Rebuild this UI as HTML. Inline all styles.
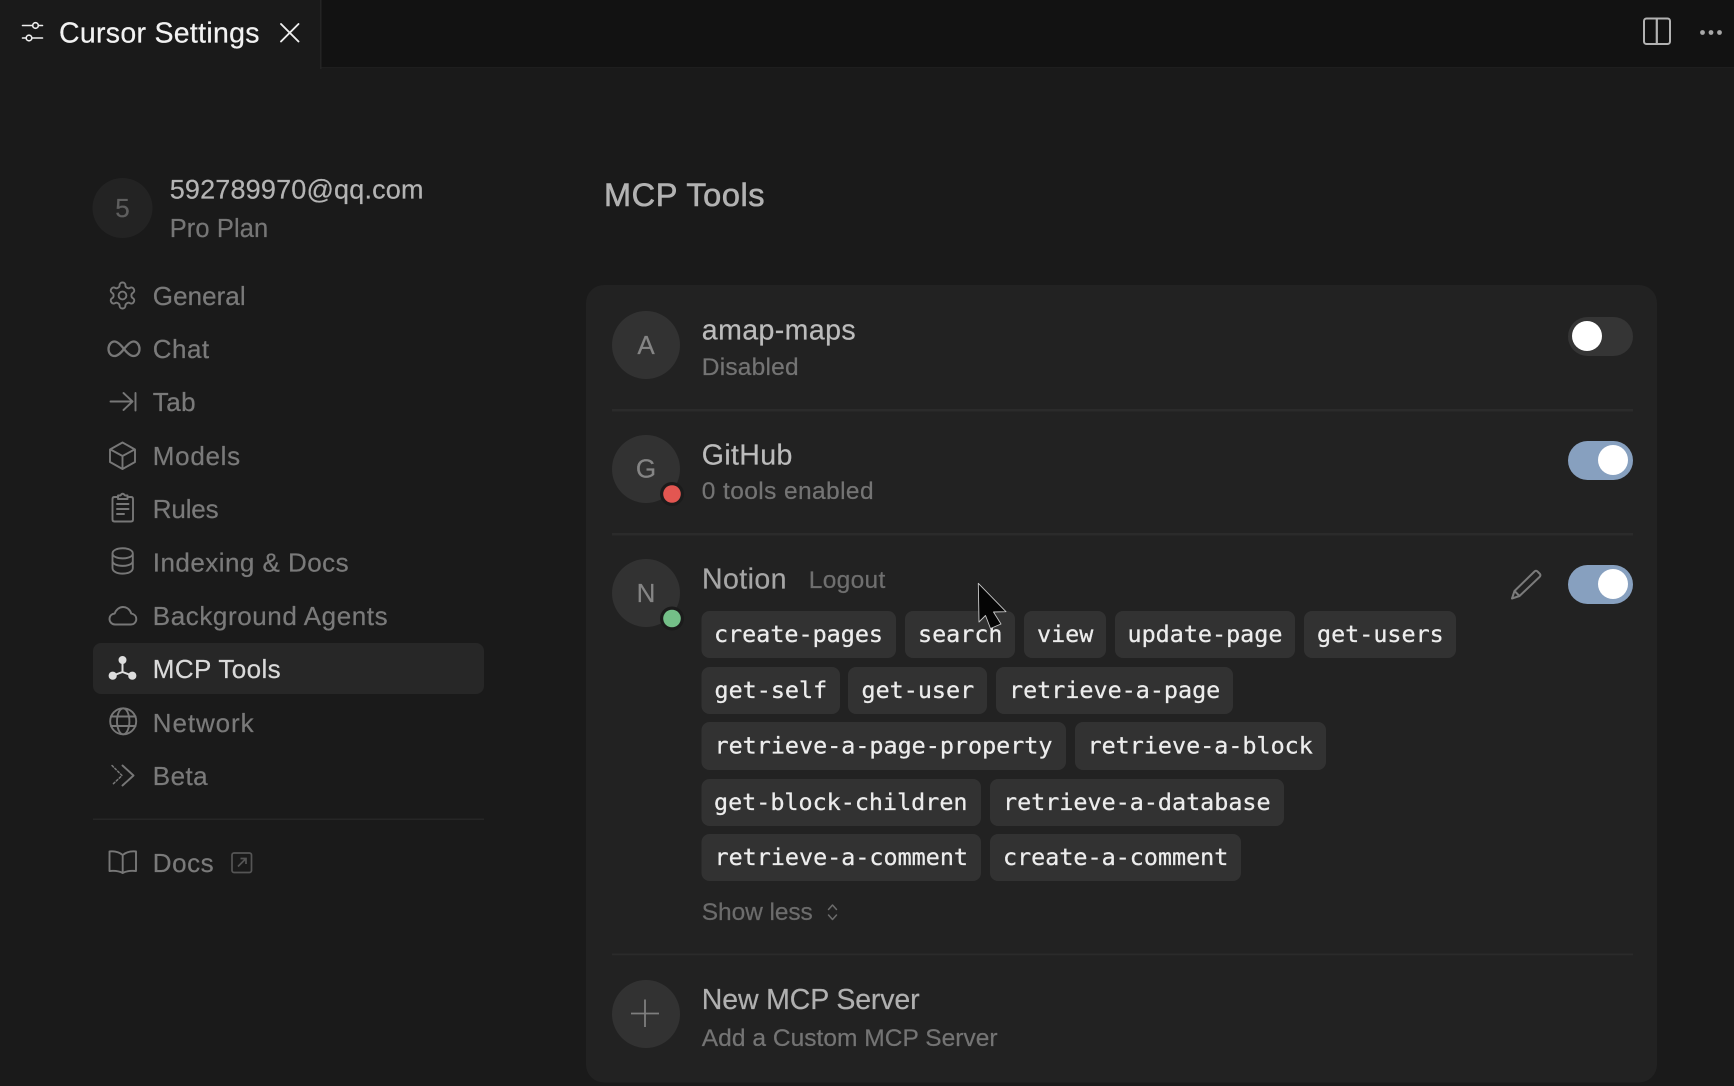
<!DOCTYPE html>
<html lang="en">
<head>
<meta charset="utf-8">
<title>Cursor Settings</title>
<style>
html,body{margin:0;padding:0;background:#1a1a1a;width:1734px;height:1086px;overflow:hidden}
svg{display:block;position:absolute;left:0;top:0}
text{font-family:"Liberation Sans",sans-serif;white-space:pre;fill:currentColor;stroke:currentColor;stroke-width:.22px}
.n{font-size:26px;color:#7a7a7a}
.h{font-size:28.5px;color:#bcbcbc}
.s{font-size:24.5px;color:#747474}
.m{font-family:"DejaVu Sans Mono","Liberation Mono",monospace;font-size:23.4px;color:#ececec;stroke-width:.28px}
.c{fill:#323232}
.l{font-size:26px;text-anchor:middle;color:#858585}
.i{fill:none;stroke:#777;stroke-width:1.9;stroke-linecap:round;stroke-linejoin:round}
</style>
</head>
<body>
<svg width="1734" height="1086" viewBox="0 0 1734 1086" xmlns="http://www.w3.org/2000/svg">
<rect width="1734" height="1086" fill="#1a1a1a"/>
<!-- tab bar -->
<rect x="320" y="0" width="1414" height="67" fill="#121212"/>
<rect x="320" y="67" width="1414" height="1" fill="#1e1e1e"/>
<rect x="320" y="0" width="1.5" height="69" fill="#242424"/>
<g fill="none" stroke="#efefef" stroke-width="1.6" stroke-linecap="round">
<path d="M22.5 25.5H32.5M38.5 25.5H42.5M22.5 38H26M32 38H42.5"/>
<circle cx="35.5" cy="25.5" r="2.8"/><circle cx="29" cy="38" r="2.8"/>
<path d="M281 24L298.500 41.5M298.500 24L281 41.5" stroke-width="1.9"/>
</g>
<text x="59" y="42.300" style="font-size:28.5px;color:#f2f2f2" textLength="200.500" lengthAdjust="spacing">Cursor Settings</text>
<rect x="1644" y="18.500" width="26" height="25.500" rx="2.500" fill="none" stroke="#b2b2b2" stroke-width="2"/>
<path d="M1656.800 18.500V44" stroke="#b2b2b2" stroke-width="2.200"/>
<g fill="#a8a8a8"><circle cx="1702.500" cy="32.500" r="2.400"/><circle cx="1711" cy="32.500" r="2.400"/><circle cx="1719.500" cy="32.500" r="2.400"/></g>

<!-- account -->
<circle cx="122.500" cy="208" r="30" fill="#232323"/>
<text x="122.500" y="217" class="l" style="color:#5e5e5e">5</text>
<text x="169.700" y="198.500" style="font-size:27px;color:#b4b4b4" textLength="253.800" lengthAdjust="spacing">592789970@qq.com</text>
<text x="169.700" y="237" style="font-size:25.5px;color:#767676" textLength="98.500" lengthAdjust="spacing">Pro Plan</text>

<!-- active nav -->
<rect x="93" y="643" width="391" height="51" rx="8" fill="#272727"/>

<!-- nav icons -->
<g transform="translate(106.900 279.900) scale(1.3)"><g class="i" style="stroke-width:1.45">
<path d="M12.220 2h-.44a2 2 0 0 0-2 2v.18a2 2 0 0 1-1 1.730l-.43.25a2 2 0 0 1-2 0l-.15-.08a2 2 0 0 0-2.730.73l-.22.38a2 2 0 0 0 .73 2.730l.15.1a2 2 0 0 1 1 1.720v.51a2 2 0 0 1-1 1.740l-.15.09a2 2 0 0 0-.73 2.730l.22.38a2 2 0 0 0 2.730.73l.15-.08a2 2 0 0 1 2 0l.43.25a2 2 0 0 1 1 1.730V20a2 2 0 0 0 2 2h.44a2 2 0 0 0 2-2v-.18a2 2 0 0 1 1-1.730l.43-.25a2 2 0 0 1 2 0l.15.08a2 2 0 0 0 2.730-.73l.22-.39a2 2 0 0 0-.73-2.730l-.15-.08a2 2 0 0 1-1-1.740v-.5a2 2 0 0 1 1-1.740l.15-.09a2 2 0 0 0 .73-2.730l-.22-.38a2 2 0 0 0-2.730-.73l-.15.08a2 2 0 0 1-2 0l-.43-.25a2 2 0 0 1-1-1.730V4a2 2 0 0 0-2-2z"/>
<circle cx="12" cy="12" r="3"/></g></g>
<path class="i" style="stroke-width:2.300" d="M124 349C120.500 344.500 117.500 341.500 114.500 341.500C111 341.500 108.500 345 108.500 349C108.500 353 111 356 114.500 356C117.500 356 120.500 353.500 124 349C127.500 344.500 130.500 341.500 133.500 341.500C137 341.500 139.500 345 139.500 349C139.500 353 137 356 133.500 356C130.500 356 127.500 353.500 124 349Z"/>
<path class="i" d="M110.500 401.500H132.500M123.500 393L132.500 401.500L123.500 410M135.500 393V410.500"/>
<path class="i" d="M122.500 442.500L135 449.500V462L122.500 469L110 462V449.500ZM110.500 449.500L122.500 456L134.500 449.500M122.500 456V468.500"/>
<path class="i" d="M118 497H114.500Q112.500 497 112.500 499V519.500Q112.500 521.500 114.500 521.500H131Q133 521.500 133 519.500V499Q133 497 131 497H127.500M118 499V495.500H120.500Q122.500 492 125 495.500H127.500V499ZM117 504H128.500M117 509H128.500M117 514H124"/>
<path class="i" d="M112.500 553.500C112.500 546.500 132.800 546.500 132.800 553.500C132.800 560 112.500 560 112.500 553.500ZM112.500 553.500V568C112.500 575.500 132.800 575.500 132.800 568V553.500M112.500 561C112.500 567.500 132.800 567.500 132.800 561"/>
<path class="i" d="M115 624.500C111.500 624.500 109.500 621.500 109.500 619C109.500 615.500 112 613.800 114.700 613.500C116 609.500 119.500 607 123 607C127.500 607 130.500 610.500 131.200 613.500C134 614 136.300 616 136.300 619C136.300 622 134 624.500 131 624.500Z"/>
<g fill="#dedede" stroke="#dedede" stroke-width="2">
<path d="M122.500 660V672M122.500 672L112.700 675.700M122.500 672L132.300 675.700" fill="none"/>
<circle cx="122.500" cy="660" r="3"/><circle cx="112.700" cy="675.700" r="3.100"/><circle cx="132.300" cy="675.700" r="3.100"/>
</g>
<g class="i"><circle cx="123.200" cy="721.300" r="13"/><ellipse cx="123.200" cy="721.300" rx="6.200" ry="13"/><path d="M111 716.500H135.500M111 726H135.500"/></g>
<path class="i" stroke-dasharray="2 2" style="stroke-width:1.500" d="M112 765.500L122 775.500L112 785"/>
<path class="i" d="M122.500 765.500L133.500 775.500L122.500 785.500"/>
<path class="i" d="M122.700 855C119 852 114 851 109.500 851.500V871C114 870.500 119 871 122.700 873C126.500 871 131.500 870.500 136 871V851.500C131.500 851 126.500 852 122.700 855ZM122.700 855V872.500"/>
<rect x="232" y="853" width="19.500" height="19.500" rx="2" fill="none" stroke="#555" stroke-width="1.700"/>
<path d="M238 866.500L246 858.500M240.500 858.500H246V864" fill="none" stroke="#555" stroke-width="1.700"/>

<!-- nav text -->
<text x="152.800" y="305" class="n" textLength="92.800" lengthAdjust="spacing">General</text>
<text x="152.800" y="358" class="n" textLength="56.300" lengthAdjust="spacing">Chat</text>
<text x="152.800" y="411" class="n" textLength="42.800" lengthAdjust="spacing">Tab</text>
<text x="152.800" y="465" class="n" textLength="87.300" lengthAdjust="spacing">Models</text>
<text x="152.800" y="518" class="n" textLength="65.800" lengthAdjust="spacing">Rules</text>
<text x="152.800" y="571.500" class="n" textLength="195.800" lengthAdjust="spacing">Indexing &amp; Docs</text>
<text x="152.800" y="625" class="n" textLength="234.800" lengthAdjust="spacing">Background Agents</text>
<text x="152.800" y="678" class="n" style="color:#dadada" textLength="127.800" lengthAdjust="spacing">MCP Tools</text>
<text x="152.800" y="732" class="n" textLength="100.800" lengthAdjust="spacing">Network</text>
<text x="152.800" y="785" class="n" textLength="54.800" lengthAdjust="spacing">Beta</text>
<rect x="93" y="818.500" width="391" height="1.500" fill="#262626"/>
<text x="152.800" y="872" class="n" textLength="60.800" lengthAdjust="spacing">Docs</text>

<!-- title -->
<text x="604" y="206" style="font-size:32.5px;color:#b2b2b2;stroke-width:.6px" textLength="160.500" lengthAdjust="spacing">MCP Tools</text>

<!-- card -->
<rect x="586" y="285" width="1071" height="797.500" rx="18" fill="#222222"/>
<rect x="612" y="409" width="1021" height="2.500" fill="#2b2b2b"/>
<rect x="612" y="533" width="1021" height="2.500" fill="#2b2b2b"/>
<rect x="612" y="953.500" width="1021" height="1.700" fill="#2b2b2b"/>

<!-- avatars -->
<circle cx="646" cy="345" r="34" fill="#323232"/>
<text x="646" y="354" class="l">A</text>
<circle cx="646" cy="469" r="34" fill="#323232"/>
<text x="646" y="477.500" class="l">G</text>
<circle cx="672" cy="494" r="12" fill="#1b1b1b"/><circle cx="672" cy="494" r="8.800" fill="#e35651"/>
<circle cx="646" cy="593" r="34" fill="#323232"/>
<text x="646" y="602" class="l">N</text>
<circle cx="672" cy="618.500" r="12" fill="#1b1b1b"/><circle cx="672" cy="618.500" r="8.800" fill="#74bf88"/>
<circle cx="646" cy="1014" r="34" fill="#323232"/>
<path d="M631 1013.500H659M645 999.500V1027" stroke="#7e7e7e" stroke-width="1.800"/>

<!-- row text -->
<text x="701.800" y="339.500" class="h" textLength="153.800" lengthAdjust="spacing">amap-maps</text>
<text x="701.800" y="375" class="s" textLength="96.800" lengthAdjust="spacing">Disabled</text>
<text x="701.800" y="464.500" class="h" textLength="90.500" lengthAdjust="spacing">GitHub</text>
<text x="701.800" y="499" class="s" textLength="171.800" lengthAdjust="spacing">0 tools enabled</text>
<text x="702" y="588.500" class="h" style="color:#a6a6a6" textLength="84.500" lengthAdjust="spacing">Notion</text>
<text x="808.800" y="588" class="s" style="color:#6f6f6f" textLength="76.500" lengthAdjust="spacing">Logout</text>
<text x="701.800" y="920" class="s" style="color:#6c6c6c" textLength="111" lengthAdjust="spacing">Show less</text>
<path d="M828.500 909.500L832.500 905L836.500 909.500M828.500 915L832.500 919.500L836.500 915" fill="none" stroke="#6c6c6c" stroke-width="1.500" stroke-linecap="round" stroke-linejoin="round"/>
<text x="701.800" y="1009" class="h" style="color:#b0b0b0" textLength="217.800" lengthAdjust="spacing">New MCP Server</text>
<text x="701.800" y="1046" class="s" textLength="295.800" lengthAdjust="spacing">Add a Custom MCP Server</text>

<!-- toggles -->
<rect x="1568" y="317" width="65" height="39" rx="19.500" fill="#353535"/>
<circle cx="1587" cy="336" r="15" fill="#fff"/>
<rect x="1568" y="441" width="65" height="39" rx="19.500" fill="#87a0bf"/>
<circle cx="1613" cy="460" r="15" fill="#fff"/>
<rect x="1568" y="565" width="65" height="39" rx="19.500" fill="#87a0bf"/>
<circle cx="1613" cy="584" r="15" fill="#fff"/>
<path class="i" style="stroke:#7b7b7b;stroke-width:2" d="M1534.500 571.500Q1536 570 1537.500 571.500L1540 574Q1541 575.500 1539.500 577L1519.500 596L1512 598.500L1514.500 591ZM1514.500 591L1519.500 596"/>

<!-- chips row 1 -->
<rect class="c" x="701.500" y="611" width="194.500" height="47" rx="8"/><text class="m" x="714" y="642">create-pages</text>
<rect class="c" x="905" y="611" width="110" height="47" rx="8"/><text class="m" x="918" y="642">search</text>
<rect class="c" x="1024" y="611" width="82" height="47" rx="8"/><text class="m" x="1037" y="642">view</text>
<rect class="c" x="1115" y="611" width="180" height="47" rx="8"/><text class="m" x="1127.500" y="642">update-page</text>
<rect class="c" x="1304" y="611" width="152" height="47" rx="8"/><text class="m" x="1317" y="642">get-users</text>
<!-- row 2 -->
<rect class="c" x="701.500" y="667" width="138.500" height="47" rx="8"/><text class="m" x="714.500" y="698">get-self</text>
<rect class="c" x="848" y="667" width="139" height="47" rx="8"/><text class="m" x="861.500" y="698">get-user</text>
<rect class="c" x="996" y="667" width="237" height="47" rx="8"/><text class="m" x="1009" y="698">retrieve-a-page</text>
<!-- row 3 -->
<rect class="c" x="701.500" y="722" width="364.500" height="48" rx="8"/><text class="m" x="714.500" y="753.500">retrieve-a-page-property</text>
<rect class="c" x="1075" y="722" width="251" height="48" rx="8"/><text class="m" x="1087.500" y="753.500">retrieve-a-block</text>
<!-- row 4 -->
<rect class="c" x="701.500" y="779" width="279.500" height="47" rx="8"/><text class="m" x="714" y="810">get-block-children</text>
<rect class="c" x="990" y="779" width="294" height="47" rx="8"/><text class="m" x="1003" y="810">retrieve-a-database</text>
<!-- row 5 -->
<rect class="c" x="701.500" y="834" width="279.500" height="47" rx="8"/><text class="m" x="714.500" y="865">retrieve-a-comment</text>
<rect class="c" x="990" y="834" width="251" height="47" rx="8"/><text class="m" x="1003" y="865">create-a-comment</text>

<!-- mouse cursor -->
<path d="M978.300 583.300L1006 611.700L993.500 612L1001 624L990.500 628.500L985.500 615.500L979 622Z" fill="#050505" stroke="#c8c8c8" stroke-width=".9" stroke-linejoin="round"/>
</svg>
</body>
</html>
